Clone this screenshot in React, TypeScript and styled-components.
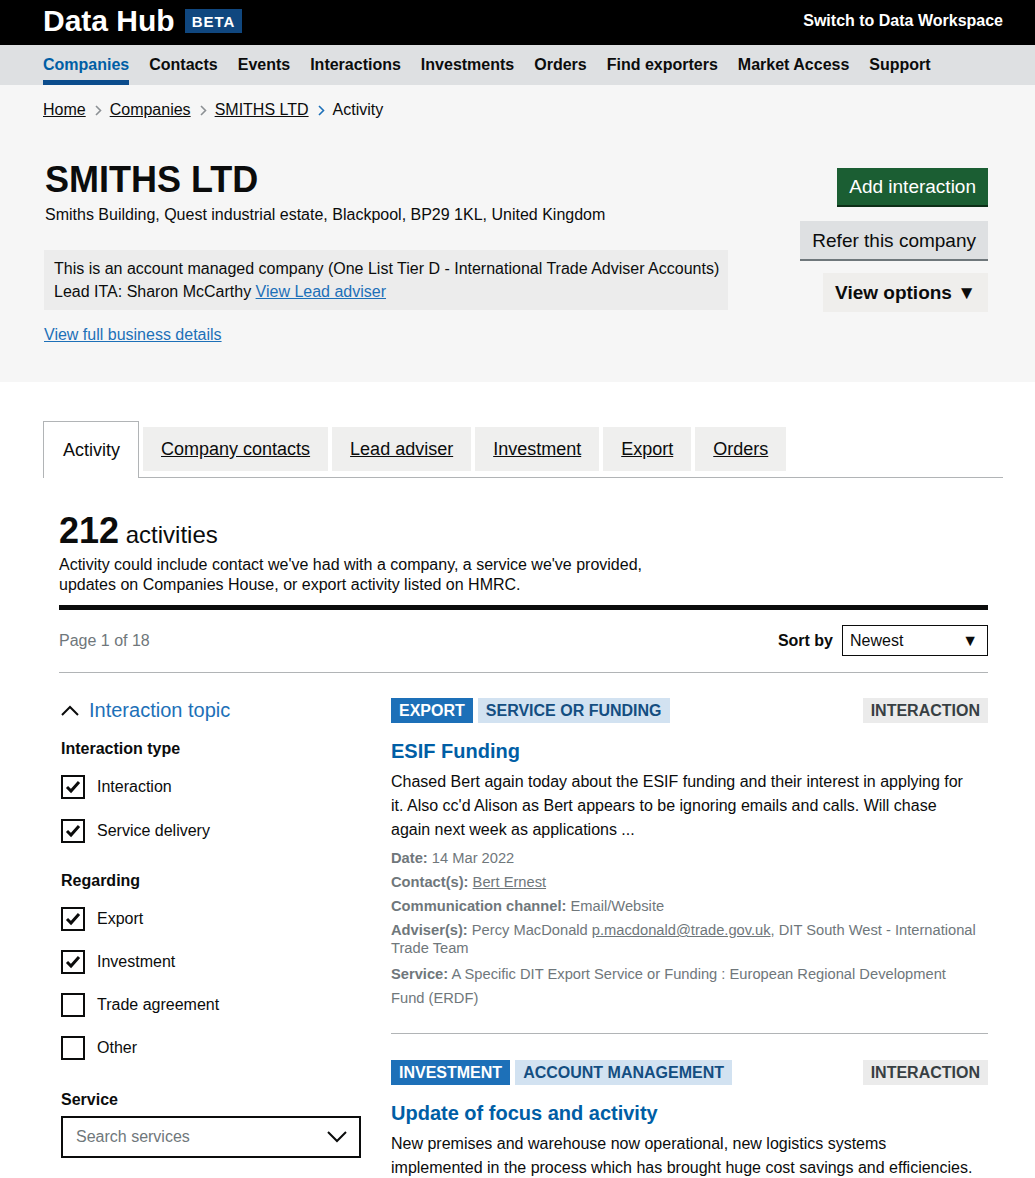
import styled, { createGlobalStyle } from "styled-components";

type Activity = {
  theme: string;
  kind: string;
  title: string;
  body: string;
};

const GlobalStyle = createGlobalStyle`
  html, body {
    margin: 0;
    padding: 0;
    background: #ffffff;
    font-family: "Liberation Sans", Arial, sans-serif;
    color: #0b0c0c;
  }
  * { box-sizing: border-box; }
`;

const Inner = styled.div`
  width: 960px;
  margin-left: 43px;
`;

const TopBar = styled.header`
  background: #000000;
  height: 45px;
`;

const TopRow = styled(Inner)`
  height: 45px;
  display: flex;
  align-items: center;
  justify-content: space-between;
  padding-bottom: 3px;
`;

const Brand = styled.div`
  display: flex;
  align-items: center;
  gap: 10px;
  color: #ffffff;
  font-size: 30px;
  font-weight: bold;
`;

const Beta = styled.span`
  background: #10477f;
  color: #ffffff;
  font-size: 15px;
  font-weight: bold;
  letter-spacing: 1px;
  padding: 4px 7px 3px;
  line-height: 17px;
`;

const Switch = styled.span`
  color: #ffffff;
  font-size: 16px;
  font-weight: bold;
`;

const NavBar = styled.nav`
  background: #dee0e2;
  height: 40px;
`;

const NavRow = styled(Inner)`
  display: flex;
  gap: 20px;
  height: 40px;
`;

const NavItem = styled.span<{ $active?: boolean }>`
  font-size: 16px;
  font-weight: bold;
  line-height: 40px;
  height: 40px;
  color: ${(p) => (p.$active ? "#005ea5" : "#0b0c0c")};
  box-shadow: ${(p) => (p.$active ? "inset 0 -5px 0 #0b4c8c" : "none")};
`;

const GreySection = styled.section`
  background: #f6f6f6;
  padding-bottom: 37px;
`;

const Crumbs = styled(Inner)`
  display: flex;
  align-items: center;
  padding-top: 15px;
  font-size: 16px;
  line-height: 20px;
`;

const CrumbLink = styled.a`
  color: #0b0c0c;
  text-decoration: underline;
`;

const CrumbSep = styled.svg`
  margin: 0 8px 0 9px;
`;

const CompanyRow = styled(Inner)`
  display: flex;
  justify-content: space-between;
  padding-right: 15px;
  margin-top: 40px;
`;

const CompanyInfo = styled.div`
  padding-left: 1px;
`;

const CompanyName = styled.h1`
  margin: 0 0 0 1px;
  font-size: 36px;
  line-height: 40px;
  font-weight: bold;
`;

const Address = styled.p`
  margin: 5px 0 0 1px;
  font-size: 16px;
  line-height: 20px;
`;

const OneListPanel = styled.div`
  margin-top: 25px;
  background: #ececec;
  width: 684px;
  padding: 7px 10px;
  font-size: 16px;
  line-height: 23px;
  white-space: nowrap;
`;

const BlueLink = styled.a`
  color: #1d70b8;
  text-decoration: underline;
`;

const DetailsLink = styled(BlueLink)`
  display: block;
  margin-top: 15px;
  font-size: 16px;
  line-height: 20px;
`;

const Actions = styled.div`
  display: flex;
  flex-direction: column;
  align-items: flex-end;
  padding-top: 8px;
`;

const Button = styled.button<{ $variant: "green" | "grey" | "plain" }>`
  font-family: "Liberation Sans", Arial, sans-serif;
  font-size: 19px;
  line-height: 23px;
  border: none;
  padding: 0 12px;
  cursor: pointer;
  display: flex;
  align-items: center;
  background: ${(p) =>
    p.$variant === "green" ? "#1b5e33" : p.$variant === "grey" ? "#dee0e2" : "#efeeec"};
  color: ${(p) => (p.$variant === "green" ? "#ffffff" : "#0b0c0c")};
  font-weight: ${(p) => (p.$variant === "plain" ? "bold" : "normal")};
  box-shadow: ${(p) =>
    p.$variant === "green"
      ? "0 2px 0 #0c2e17"
      : p.$variant === "grey"
      ? "0 2px 0 #6f777b"
      : "none"};
  height: ${(p) => (p.$variant === "green" ? "37px" : p.$variant === "grey" ? "38px" : "39px")};
  margin-bottom: ${(p) => (p.$variant === "green" ? "16px" : p.$variant === "grey" ? "14px" : "0")};
`;

const TabsArea = styled(Inner)`
  margin-top: 39px;
`;

const TabList = styled.div`
  display: flex;
  gap: 4px;
  border-bottom: 1px solid #b1b4b6;
  align-items: flex-start;
`;

const Tab = styled.span<{ $active?: boolean }>`
  font-size: 18px;
  line-height: 22px;
  color: #0b0c0c;
  ${(p) =>
    p.$active
      ? `
    background: #ffffff;
    border: 1px solid #b1b4b6;
    border-bottom: none;
    padding: 17px 18px 17px 19px;
    margin-bottom: -1px;
    height: 57px;
  `
      : `
    background: #efefee;
    margin-top: 6px;
    padding: 11px 18px;
    height: 44px;
    text-decoration: underline;
    margin-bottom: 6px;
  `}
`;

const Panel = styled(Inner)`
  padding: 33px 15px 40px 16px;
`;

const CountLine = styled.h2`
  margin: 0;
  font-size: 24px;
  line-height: 40px;
  font-weight: normal;
`;

const CountNumber = styled.span`
  font-size: 36px;
  font-weight: bold;
`;

const Intro = styled.p`
  margin: 0;
  font-size: 16px;
  line-height: 20px;
  width: 600px;
`;

const HeavyRule = styled.div`
  margin-top: 10px;
  height: 5px;
  background: #0b0c0c;
`;

const ResultsBar = styled.div`
  display: flex;
  justify-content: space-between;
  align-items: center;
  padding: 15px 0 16px;
  border-bottom: 1px solid #b1b4b6;
`;

const PageCount = styled.span`
  color: #6f777b;
  font-size: 16px;
`;

const SortWrap = styled.div`
  display: flex;
  align-items: center;
  gap: 9px;
  font-size: 16px;
  font-weight: bold;
`;

const FakeSelect = styled.div`
  width: 146px;
  height: 31px;
  border: 1px solid #0b0c0c;
  display: flex;
  align-items: center;
  justify-content: space-between;
  padding: 0 9px 0 7px;
  font-weight: normal;
  font-size: 16px;
`;

const Columns = styled.div`
  display: grid;
  grid-template-columns: 302px 597px;
  gap: 30px;
  padding-top: 25px;
`;

const Filters = styled.aside`
  padding-left: 2px;
`;

const TopicToggle = styled.div`
  display: flex;
  align-items: center;
  gap: 10px;
  color: #1d70b8;
  font-size: 20px;
  line-height: 24px;
`;

const GroupLabel = styled.div<{ $gap: number }>`
  margin-top: ${(p) => p.$gap}px;
  font-size: 16px;
  font-weight: bold;
  line-height: 20px;
`;

const CheckList = styled.div<{ $gap: number }>`
  display: flex;
  flex-direction: column;
  gap: ${(p) => p.$gap}px;
  margin-top: 16px;
`;

const CheckRow = styled.label`
  display: flex;
  align-items: center;
  gap: 12px;
  font-size: 16px;
  line-height: 24px;
`;

const Box = styled.span`
  width: 24px;
  height: 24px;
  border: 2px solid #0b0c0c;
  display: flex;
  align-items: center;
  justify-content: center;
  background: #ffffff;
`;

const SearchBox = styled.div`
  margin-top: 6px;
  width: 300px;
  height: 42px;
  border: 2px solid #0b0c0c;
  display: flex;
  align-items: center;
  justify-content: space-between;
  padding: 0 12px 0 13px;
  color: #6f777b;
  font-size: 16px;
`;

const ActivityItem = styled.article<{ $last?: boolean }>`
  padding-bottom: ${(p) => (p.$last ? "0" : "23px")};
  margin-bottom: ${(p) => (p.$last ? "0" : "26px")};
  border-bottom: ${(p) => (p.$last ? "none" : "1px solid #b1b4b6")};
`;

const TagRow = styled.div`
  display: flex;
  gap: 5px;
`;

const Tag = styled.span<{ $tone: "blue" | "light" | "grey" }>`
  font-size: 16px;
  font-weight: bold;
  line-height: 25px;
  height: 25px;
  padding: 0 8px;
  text-transform: uppercase;
  background: ${(p) =>
    p.$tone === "blue" ? "#1d70b8" : p.$tone === "light" ? "#d2e2f1" : "#ebebeb"};
  color: ${(p) =>
    p.$tone === "blue" ? "#ffffff" : p.$tone === "light" ? "#144e81" : "#383f43"};
  margin-left: ${(p) => (p.$tone === "grey" ? "auto" : "0")};
`;

const ItemTitle = styled.h3`
  margin: 16px 0 0;
  font-size: 20px;
  line-height: 24px;
  color: #005ea5;
  font-weight: bold;
`;

const ItemBody = styled.p`
  margin: 7px 0 0;
  font-size: 16px;
  line-height: 24px;
  max-width: 585px;
`;

const Meta = styled.div`
  margin-top: 7px;
  color: #6f777b;
  font-size: 14.7px;
`;

const MetaLine = styled.div<{ $tall?: boolean }>`
  line-height: ${(p) => (p.$tall ? "24px" : "18px")};
  margin-top: ${(p) => (p.$tall ? "5px" : "6px")};
  max-width: ${(p) => (p.$tall ? "575px" : "none")};
  &:first-child { margin-top: 0; }
  b { font-weight: bold; }
  a { color: #6f777b; text-decoration: underline; }
`;

const Chevron = ({ color }: { color: string }) => (
  <CrumbSep width="7" height="11" viewBox="0 0 7 11">
    <path d="M1 1 L5.5 5.5 L1 10" fill="none" stroke={color} strokeWidth="1.6" />
  </CrumbSep>
);

const Tick = () => (
  <svg width="16" height="14" viewBox="0 0 16 14">
    <path d="M2 7 L6 11 L14 2" fill="none" stroke="#0b0c0c" strokeWidth="3" />
  </svg>
);

const Check = ({ label, checked }: { label: string; checked?: boolean }) => (
  <CheckRow>
    <Box>{checked && <Tick />}</Box>
    {label}
  </CheckRow>
);

const navItems = [
  "Companies",
  "Contacts",
  "Events",
  "Interactions",
  "Investments",
  "Orders",
  "Find exporters",
  "Market Access",
  "Support",
];

const tabs = ["Activity", "Company contacts", "Lead adviser", "Investment", "Export", "Orders"];

const second: Activity = {
  theme: "Investment",
  kind: "Account management",
  title: "Update of focus and activity",
  body: "New premises and warehouse now operational, new logistics systems implemented in the process which has brought huge cost savings and efficiencies.",
};

export default function App() {
  return (
    <>
      <GlobalStyle />
      <TopBar>
        <TopRow>
          <Brand>
            Data Hub <Beta>BETA</Beta>
          </Brand>
          <Switch>Switch to Data Workspace</Switch>
        </TopRow>
      </TopBar>
      <NavBar>
        <NavRow>
          {navItems.map((n, i) => (
            <NavItem key={n} $active={i === 0}>
              {n}
            </NavItem>
          ))}
        </NavRow>
      </NavBar>

      <GreySection>
        <Crumbs>
          <CrumbLink>Home</CrumbLink>
          <Chevron color="#8c9094" />
          <CrumbLink>Companies</CrumbLink>
          <Chevron color="#8c9094" />
          <CrumbLink>SMITHS LTD</CrumbLink>
          <Chevron color="#1d70b8" />
          <span>Activity</span>
        </Crumbs>
        <CompanyRow>
          <CompanyInfo>
            <CompanyName>SMITHS LTD</CompanyName>
            <Address>
              Smiths Building, Quest industrial estate, Blackpool, BP29 1KL, United Kingdom
            </Address>
            <OneListPanel>
              This is an account managed company (One List Tier D - International Trade Adviser
              Accounts)
              <br />
              Lead ITA: Sharon McCarthy <BlueLink>View Lead adviser</BlueLink>
            </OneListPanel>
            <DetailsLink>View full business details</DetailsLink>
          </CompanyInfo>
          <Actions>
            <Button $variant="green">Add interaction</Button>
            <Button $variant="grey">Refer this company</Button>
            <Button $variant="plain">View options ▼</Button>
          </Actions>
        </CompanyRow>
      </GreySection>

      <TabsArea>
        <TabList>
          {tabs.map((t, i) => (
            <Tab key={t} $active={i === 0}>
              {t}
            </Tab>
          ))}
        </TabList>
      </TabsArea>

      <Panel>
        <CountLine>
          <CountNumber>212</CountNumber> activities
        </CountLine>
        <Intro>
          Activity could include contact we've had with a company, a service we've provided,
          updates on Companies House, or export activity listed on HMRC.
        </Intro>
        <HeavyRule />
        <ResultsBar>
          <PageCount>Page 1 of 18</PageCount>
          <SortWrap>
            Sort by
            <FakeSelect>
              Newest <span>▼</span>
            </FakeSelect>
          </SortWrap>
        </ResultsBar>

        <Columns>
          <Filters>
            <TopicToggle>
              <svg width="18" height="11" viewBox="0 0 18 11">
                <path d="M1 10 L9 2 L17 10" fill="none" stroke="#0b0c0c" strokeWidth="2" />
              </svg>
              Interaction topic
            </TopicToggle>
            <GroupLabel $gap={17}>Interaction type</GroupLabel>
            <CheckList $gap={20}>
              <Check label="Interaction" checked />
              <Check label="Service delivery" checked />
            </CheckList>
            <GroupLabel $gap={28}>Regarding</GroupLabel>
            <CheckList $gap={19}>
              <Check label="Export" checked />
              <Check label="Investment" checked />
              <Check label="Trade agreement" />
              <Check label="Other" />
            </CheckList>
            <GroupLabel $gap={30}>Service</GroupLabel>
            <SearchBox>
              Search services
              <svg width="20" height="12" viewBox="0 0 20 12">
                <path d="M1 1 L10 10 L19 1" fill="none" stroke="#0b0c0c" strokeWidth="2" />
              </svg>
            </SearchBox>
          </Filters>

          <div>
            <ActivityItem>
              <TagRow>
                <Tag $tone="blue">Export</Tag>
                <Tag $tone="light">Service or funding</Tag>
                <Tag $tone="grey">Interaction</Tag>
              </TagRow>
              <ItemTitle>ESIF Funding</ItemTitle>
              <ItemBody>
                Chased Bert again today about the ESIF funding and their interest in applying for
                it. Also cc'd Alison as Bert appears to be ignoring emails and calls. Will chase
                again next week as applications ...
              </ItemBody>
              <Meta>
                <MetaLine>
                  <b>Date:</b> 14 Mar 2022
                </MetaLine>
                <MetaLine>
                  <b>Contact(s):</b> <a>Bert Ernest</a>
                </MetaLine>
                <MetaLine>
                  <b>Communication channel:</b> Email/Website
                </MetaLine>
                <MetaLine>
                  <b>Adviser(s):</b> Percy MacDonald <a>p.macdonald@trade.gov.uk</a>, DIT South
                  West - International Trade Team
                </MetaLine>
                <MetaLine $tall>
                  <b>Service:</b> A Specific DIT Export Service or Funding : European Regional
                  Development Fund (ERDF)
                </MetaLine>
              </Meta>
            </ActivityItem>

            <ActivityItem $last>
              <TagRow>
                <Tag $tone="blue">{second.theme}</Tag>
                <Tag $tone="light">{second.kind}</Tag>
                <Tag $tone="grey">Interaction</Tag>
              </TagRow>
              <ItemTitle>{second.title}</ItemTitle>
              <ItemBody>{second.body}</ItemBody>
            </ActivityItem>
          </div>
        </Columns>
      </Panel>
    </>
  );
}
